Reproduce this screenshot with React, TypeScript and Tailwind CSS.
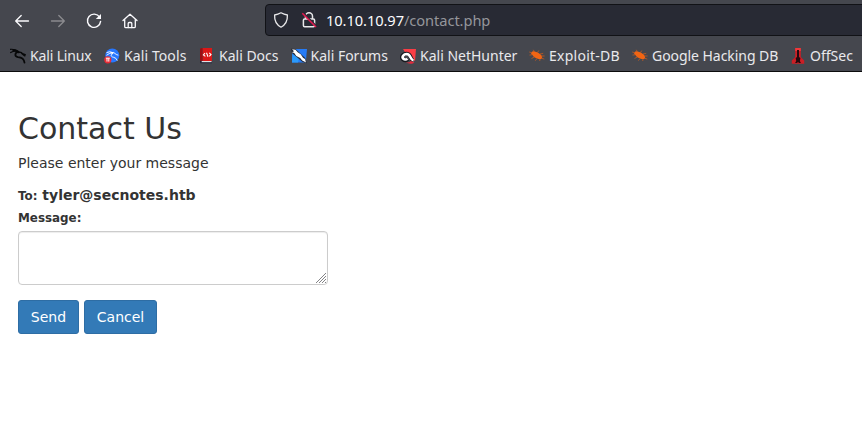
import React from "react";

const chromeFont = "font-['Noto_Sans',sans-serif]";

function BackArrow({ dim = false }: { dim?: boolean }) {
  return (
    <svg width="16" height="16" viewBox="0 0 16 16" fill="none" stroke={dim ? "#8b8b8f" : "#fbfbfe"} strokeWidth="1.3" strokeLinecap="round" strokeLinejoin="round" className={dim ? "-scale-x-100" : ""}>
      <path d="M14.5 8H1.8M7.2 2.5L1.7 8l5.5 5.5" />
    </svg>
  );
}

function Reload() {
  return (
    <svg width="16" height="16" viewBox="0 0 16 16" fill="none">
      <path d="M13.6 4.2A6.6 6.6 0 1 0 14.6 8.4" stroke="#fbfbfe" strokeWidth="1.4" strokeLinecap="round" />
      <path d="M15 .9v5.2H9.8z" fill="#fbfbfe" />
    </svg>
  );
}

function Home() {
  return (
    <svg width="16" height="16" viewBox="0 0 16 16" fill="none" stroke="#fbfbfe" strokeWidth="1.3" strokeLinejoin="round" strokeLinecap="round">
      <path d="M1 7.6L8 1.2l7 6.4M2.7 6.5v7q0 1.2 1.2 1.2h8.2q1.2 0 1.2-1.2v-7" />
      <path d="M6.2 14.5v-4q0-1 1-1h1.6q1 0 1 1v4" />
    </svg>
  );
}

function Shield() {
  return (
    <svg width="16" height="16" viewBox="0 0 16 16" fill="none" stroke="#e8e8ea" strokeWidth="1.3" strokeLinejoin="round">
      <path d="M8 .8q3 1.700 6.400 2.200.4 8.500-6.400 12.200Q1.200 11.500 1.600 3 5 2.500 8 .8z" />
    </svg>
  );
}

function BrokenLock() {
  return (
    <svg width="16" height="16" viewBox="0 0 16 16" fill="none">
      <path d="M4.500 7V4.300a3.500 3.500 0 0 1 7 0V7M3.600 7h8.800q1.200 0 1.200 1.200v5.300q0 1.200-1.200 1.200H3.600q-1.200 0-1.200-1.200V8.200Q2.400 7 3.600 7z" stroke="#e8e8ea" strokeWidth="1.5" />
      <path d="M2.300 1l13.200 13.200" stroke="#282a34" strokeWidth="1.800" />
      <path d="M1.300 1.300l13.700 13.700" stroke="#e3194f" strokeWidth="1.600" />
    </svg>
  );
}

function KaliDragon() {
  return (
    <svg width="16" height="16" viewBox="0 0 16 16" fill="none" stroke="#070809" strokeLinecap="round" strokeLinejoin="round">
      <path d="M.3 1.300q4.500-.4 7.700 1.900M.7 4.600Q4.400 2 8.100 3.700" strokeWidth="1.200" />
      <path d="M3.200 2.200q3.500.2 5.200 1.700" strokeWidth="1.700" />
      <path d="M8.500 3.900C4.700 4.300 4.200 8.500 8 9.200c3.500.2 6 1.300 6.500 5.500" strokeWidth="1.800" />
      <path d="M8.300 4.500q3-.9 4.200 1.300l2.700.8M11.800 5.500l3 2.300" strokeWidth="1.500" />
    </svg>
  );
}

function KaliTools() {
  return (
    <svg width="16" height="16" viewBox="0 0 16 16" fill="none">
      <circle cx="8.300" cy="7.500" r="7" fill="#2777ff" />
      <path d="M2.500 4.700q3-2 7 .1M2.500 7.300Q6 4 9.200 5.400M6.500 4.500q3.500-1 5.800 2l2 .7M9 5.500c-3 1-2 3.500.6 3.800q2.500.3 3.700 3.300" stroke="#fff" strokeWidth=".9" />
      <circle cx="3.800" cy="11.800" r="3.600" fill="#e82c35" />
      <path d="M1.900 10.200h3.900M3 10.400v3.200M4.800 10.400v3.200" stroke="#fff" strokeWidth="1" />
    </svg>
  );
}

function KaliDocs() {
  return (
    <svg width="16" height="16" viewBox="0 0 16 16" fill="none">
      <path d="M3.500 0H13v13H3.500z" fill="#db1717" />
      <path d="M1 1.500Q1 0 2.500 0h1v13H1z" fill="#9c0e12" />
      <path d="M2.500 13H12.500v1.500H2.500z" fill="#e0dfe1" />
      <path d="M1 12.700v1.800q0 .8.800.8H13v-1H2.500v-1.600z" fill="#25273b" />
      <path d="M6 5.100L4.400 6.900l2 1.500M10.200 4.900L12 6.500l-1.700 1.800M7.500 4.800L9 8.700" stroke="#fff" strokeWidth="1.100" />
    </svg>
  );
}

function KaliForums() {
  return (
    <svg width="16" height="16" viewBox="0 0 16 16" fill="none">
      <path d="M1.300 1H16l-1.200 13.500H1z" fill="#267bf5" />
      <path d="M1.500 6L8 10l-1 4.500H1z" fill="#2b9afa" />
      <path d="M0 .8l4.500.2L14.200 10l1.500 5.300-4.400-1.500L1 5z" fill="#222936" />
      <path d="M1 1.300l3.500.4 2.200 2.500 3 2.100 2.300 3.400 2 1.400 1 3.300-3.800-1.800-2-2.700-3.900-2L3.200 5 1 4.300l2-1.100z" fill="#fff" />
    </svg>
  );
}

function NetHunter() {
  return (
    <svg width="16" height="16" viewBox="0 0 16 16" fill="none">
      <path d="M3 1h13l-1 12.200L13 11 5 4.200z" fill="#fa3d45" />
      <path d="M13.400 12.500C9.800 11.700 11.500 6 6.800 5.700 2.600 5.600.7 9.200 3 11.300c1.600 1.500 3.500 1.200 4.600-.2" stroke="#17191f" strokeWidth="4" />
      <path d="M13.500 12.500C9.800 11.700 11 6.100 6.800 6 3.400 6 1.600 9.100 3.300 10.700c1.300 1.300 3 1 4-.1" stroke="#fff" strokeWidth="2.600" />
      <path d="M5.500 14.200q3.500 1.200 5.300-1.100l3.700 1.500-1.800.8q-3.700.8-7.200-1.200z" fill="#e42b3e" />
    </svg>
  );
}

function Bug() {
  return (
    <svg width="16" height="16" viewBox="0 0 16 16" fill="none">
      <path d="M2.600 4.200Q3.700 2.500 5.600 3.600l3.300.8q3.700 1.900 4.300 4.900l-.8 1.800-2.900-.2Q5 10 3.600 7.300L2 5.800z" fill="#f26513" />
      <path d="M3 4.800L.2 4M3.300 6.700L.5 7.100M5.500 4L4.300 1.800M8.200 4.300l2-1.700M11 6l3.200-.7M12.600 8h3M13 10.300l2.300.8M5.300 9L2.500 10.500M8 10.500l-1.700 2.200M11 11l-.3 2" stroke="#c25b22" strokeWidth=".8" />
    </svg>
  );
}

function OffSec() {
  return (
    <svg width="16" height="16" viewBox="0 0 16 16" fill="none">
      <path d="M5.200 0h5.600v8.900l3.400 3.600v3.300H1.800v-3.300l3.400-3.600z" fill="#cc1e25" />
      <path d="M5.200 0h5.600v3H5.200z" fill="#ef383a" />
      <path d="M7 2h2v7l1.400 1-.5 3 1 1.900H9L8 14l-1 .9H5.100L6.200 13l-.5-3L7 9z" fill="#25090e" />
    </svg>
  );
}

function ResizeGrip() {
  return (
    <svg width="11" height="11" viewBox="0 0 11 11" fill="none" stroke="#77777a" strokeWidth=".9" className="absolute bottom-0.5 right-0.5" shapeRendering="crispEdges">
      <path d="M.5 10.500l10-10M3.500 10.500l7-7M6.500 10.500l4-4M9.500 10.500l1-1" />
    </svg>
  );
}

const bookmarks = [
  { label: "Kali Linux", Icon: KaliDragon, width: "w-[94px]", tracking: "tracking-[-0.15px]" },
  { label: "Kali Tools", Icon: KaliTools, width: "w-[95px]", tracking: "tracking-[0.1px]" },
  { label: "Kali Docs", Icon: KaliDocs, width: "w-[91.500px]", tracking: "" },
  { label: "Kali Forums", Icon: KaliForums, width: "w-[109.500px]", tracking: "" },
  { label: "Kali NetHunter", Icon: NetHunter, width: "w-[129px]", tracking: "" },
  { label: "Exploit-DB", Icon: Bug, width: "w-[103px]", tracking: "tracking-[0.25px]" },
  { label: "Google Hacking DB", Icon: Bug, width: "w-[158px]", tracking: "tracking-[-0.050px]" },
  { label: "OffSec", Icon: OffSec, width: "w-[72px]", tracking: "" },
];

export default function App() {
  return (
    <div className="flex h-[435px] w-[862px] flex-col overflow-hidden bg-white">
      <header className={`${chromeFont} h-[72px] shrink-0 border-b border-[#0c0c0d] bg-[#45474e]`}>
        <div className="flex h-10 items-center">
          <nav className="flex w-[265px] shrink-0 gap-5 pl-3.5 pt-px">
            <BackArrow />
            <BackArrow dim />
            <Reload />
            <Home />
          </nav>
          <div className="flex h-8 w-[620px] shrink-0 items-center rounded border border-[#111216] bg-[#282a34] pl-[7px]">
            <Shield />
            <span className="ml-3"><BrokenLock /></span>
            <span className="ml-[9px] whitespace-nowrap text-[14.67px] leading-5 tracking-[-0.080px] text-[#fbfbfe]">
              10.10.10.97<span className="text-[#95969b]">/contact.php</span>
            </span>
          </div>
        </div>
        <div className="flex h-8 items-center pl-2.5">
          {bookmarks.map(({ label, Icon, width, tracking }) => (
            <div key={label} className={`flex shrink-0 items-center gap-1 ${width}`}>
              <span className="shrink-0"><Icon /></span>
              <span className={`whitespace-nowrap text-[14px] leading-5 text-[#e9e9ec] ${tracking}`}>{label}</span>
            </div>
          ))}
        </div>
      </header>
      <main className="px-[18px] pt-10 font-['DejaVu_Sans',sans-serif] text-sm leading-5 text-[#333]">
        <h1 className="text-[30px] leading-[33px]">Contact Us</h1>
        <p className="mt-2">Please enter your message</p>
        <form>
          <p className="mt-3 font-bold"><span className="text-[11.900px]">To:</span> tyler@secnotes.htb</p>
          <label className="mt-0.5 block text-[11.900px] font-bold" htmlFor="message">Message:</label>
          <div className="relative mt-[3px] h-[54px] w-[310px]">
            <textarea id="message" className="block h-full w-full resize-none rounded-[4px] border border-[#ccc] shadow-[inset_0_1px_1px_rgba(0,0,0,0.075)] outline-none" />
            <ResizeGrip />
          </div>
          <div className="mt-[15px] flex gap-[5px] text-white">
            <button type="button" className="h-[34px] w-[61px] rounded-[3px] border border-[#2e6da4] bg-[#337ab7]">Send</button>
            <button type="button" className="h-[34px] w-[73px] rounded-[3px] border border-[#2e6da4] bg-[#337ab7]">Cancel</button>
          </div>
        </form>
      </main>
    </div>
  );
}
